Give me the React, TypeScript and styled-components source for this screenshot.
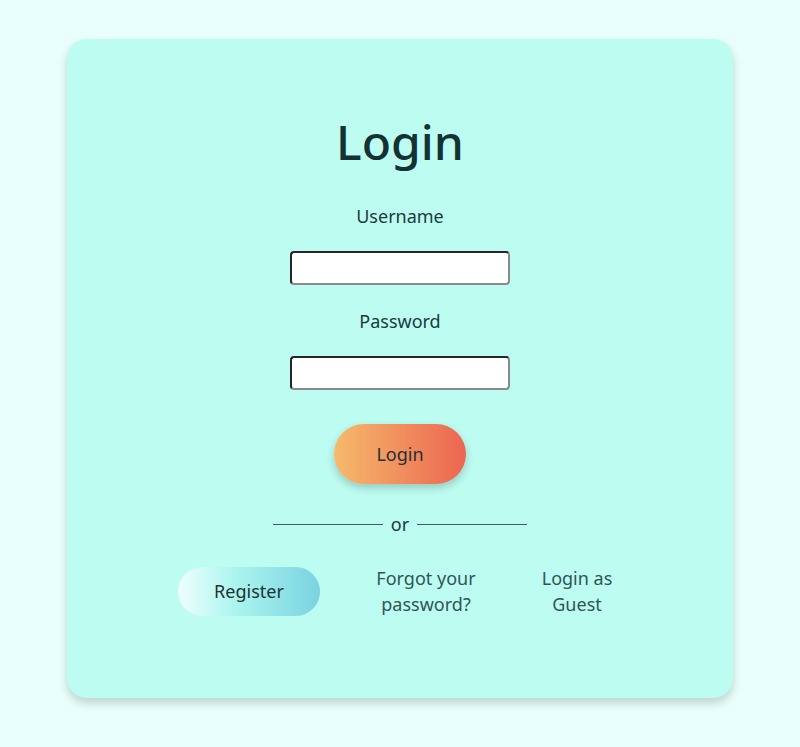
import styled, { createGlobalStyle } from 'styled-components'

const GlobalStyle = createGlobalStyle`
  body {
    margin: 0;
    background: #e8fffc;
    font-family: "Noto Sans", "Open Sans", sans-serif;
    color: #173335;
  }
`

const Page = styled.div`
  min-height: 747px;
  padding: 39px 0 50px;
  box-sizing: border-box;
`

const Card = styled.div`
  width: 666px;
  margin: 0 auto;
  padding: 75px 0 81px;
  box-sizing: border-box;
  background: #bdfcf1;
  border-radius: 20px;
  box-shadow: 0 5px 10px rgba(0, 0, 0, 0.18);
  display: flex;
  flex-direction: column;
  align-items: center;
`

const Title = styled.h1`
  margin: 0 0 34px;
  font-size: 48px;
  line-height: 56px;
  font-weight: 500;
  color: #143234;
`

const Label = styled.label`
  display: block;
  font-size: 18px;
  line-height: 24px;
  margin-bottom: 23px;
  color: #1b3a3c;
`

const Input = styled.input<{ $last?: boolean }>`
  width: 220px;
  height: 34px;
  box-sizing: border-box;
  border: 2px solid;
  border-color: #262626 #8a8a8a #8a8a8a #262626;
  border-radius: 4px;
  background: #fff;
  margin-bottom: ${p => (p.$last ? '34px' : '24px')};
  outline: none;
`

const LoginButton = styled.button`
  width: 132px;
  height: 60px;
  border: none;
  border-radius: 30px;
  background: linear-gradient(90deg, #f6ba6c, #ec6551);
  box-shadow: 0 4px 8px rgba(0, 0, 0, 0.2);
  font-family: inherit;
  font-size: 18px;
  color: #1f3234;
  cursor: pointer;
  margin-bottom: 28px;
`

const Divider = styled.div`
  display: flex;
  align-items: center;
  gap: 8px;
  font-size: 18px;
  line-height: 24px;
  margin-bottom: 29px;
  color: #1b3a3c;

  &::before,
  &::after {
    content: '';
    width: 110px;
    height: 1px;
    background: #3f5f60;
  }
`

const Options = styled.div`
  display: flex;
  align-items: center;
  gap: 46px;
`

const RegisterButton = styled.button`
  width: 142px;
  height: 49px;
  border: none;
  border-radius: 25px;
  background: linear-gradient(90deg, #effffd, #abf5ee 40%, #7ad3e1);
  font-family: inherit;
  font-size: 18px;
  color: #1f3234;
  cursor: pointer;
`

const TextLink = styled.a<{ $width: number }>`
  width: ${p => p.$width}px;
  text-align: center;
  font-size: 18px;
  line-height: 26px;
  color: #2f5557;
  text-decoration: none;
  cursor: pointer;
`

export default function App() {
  return (
    <>
      <GlobalStyle />
      <Page>
        <Card>
          <Title>Login</Title>
          <Label htmlFor="username">Username</Label>
          <Input id="username" type="text" />
          <Label htmlFor="password">Password</Label>
          <Input id="password" type="password" $last />
          <LoginButton>Login</LoginButton>
          <Divider>or</Divider>
          <Options>
            <RegisterButton>Register</RegisterButton>
            <TextLink $width={120}>Forgot your password?</TextLink>
            <TextLink $width={90}>Login as Guest</TextLink>
          </Options>
        </Card>
      </Page>
    </>
  )
}
